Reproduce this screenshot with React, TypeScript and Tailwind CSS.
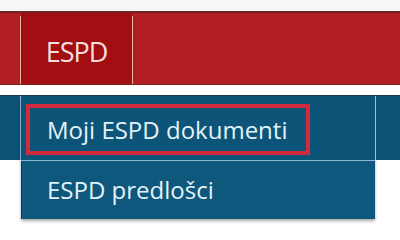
import React from "react";

export default function App() {
  return (
    <div
      className="w-[400px] h-[225px] bg-white overflow-hidden flex flex-col"
      style={{ fontFamily: '"Open Sans", "Noto Sans", sans-serif' }}
    >
      {/* top band */}
      <div className="h-[11px] bg-[#f6f6f6] shrink-0" />
      <div className="h-[2px] bg-[#6e2424] shrink-0" />
      {/* red nav bar */}
      <div className="h-[71px] shrink-0 flex bg-[#b11d21]">
        <div className="w-[20px] bg-[#b31e22]" />
        <div className="w-px mt-[3px] bg-[#f1b3b0]" />
        <div className="w-[111px] bg-[#a10f13] flex items-center justify-center pt-[6px]">
          <span className="text-[27px] leading-none tracking-[-1px] text-[#f7dede]">ESPD</span>
        </div>
        <div className="w-px mt-[3px] bg-[#f1b3b0]" />
        <div className="flex-1 bg-[#b01e22]" />
      </div>
      <div className="h-px bg-[#7a2020] shrink-0" />
      <div className="h-[10px] bg-white shrink-0" />
      <div className="h-px bg-[#173a55] shrink-0" />
      {/* blue bar + dropdown */}
      <div className="flex shrink-0">
        <div className="w-[20px] h-[64px] bg-[#0d5479]" />
        <div className="w-px h-[64px] bg-[#9cc4e0]" />
        <div className="w-[354px] flex flex-col shadow-[0_2px_3px_rgba(0,0,0,0.35)]">
          <div className="h-[64px] bg-[#0d5479] pl-[5px] pt-[8px]">
            <div className="w-[284px] h-[51px] border-4 border-[#d2293c] flex items-center pl-[17px]">
              <span className="text-[24px] text-[#e2f2f8] whitespace-nowrap">Moji ESPD dokumenti</span>
            </div>
          </div>
          <div className="h-px bg-[#8fb6d2]" />
          <div className="h-[58px] bg-[#0e577d] flex items-center pl-[25px] border-l border-[#0a3c58]">
            <span className="text-[24px] text-[#e2f2f8] whitespace-nowrap">ESPD predlošci</span>
          </div>
        </div>
        <div className="w-px h-[64px] bg-[#9cc4e0]" />
        <div className="flex-1 h-[64px] bg-[#0d5479]" />
      </div>
    </div>
  );
}
